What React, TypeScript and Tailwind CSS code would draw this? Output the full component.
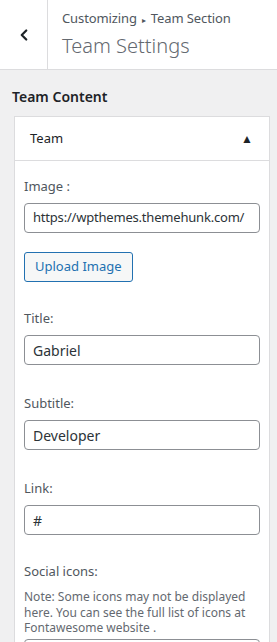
import { ChevronLeft } from 'lucide-react';

function Field({ label, value }: { label: string; value: string }) {
  return (
    <div className="mb-[30px]">
      <div className="text-[13px] text-[#50575e] leading-[16px] mb-[9px]">{label}</div>
      <div className="h-[30px] border border-[#8c8f94] rounded-[4px] px-[8px] flex items-center text-[14px] text-[#2c3338] overflow-hidden whitespace-nowrap">
        {value}
      </div>
    </div>
  );
}

export default function App() {
  return (
    <div className="w-[277px] h-[642px] overflow-hidden bg-[#f0f0f1] font-['Segoe_UI','Noto_Sans',sans-serif]">
      {/* Header */}
      <div className="flex h-[70px] bg-white border-b border-[#dcdcde]">
        <div className="w-[48px] border-r border-[#dcdcde] flex items-center justify-center text-[#1d2327]">
          <ChevronLeft className="w-[18px] h-[18px]" strokeWidth={3} />
        </div>
        <div className="pl-[14px] pt-[9px]">
          <div className="text-[13px] text-[#50575e] leading-[18px] tracking-[-0.1px]">
            Customizing<span className="text-[8px] align-middle mx-[5px]">▸</span>Team Section
          </div>
          <div className="text-[20px] text-[#646970] leading-[28px] font-light mt-[3px]">Team Settings</div>
        </div>
      </div>

      {/* Section */}
      <div className="pl-[12px] pr-[7px] pt-[18px]">
        <div className="text-[14px] font-semibold text-[#1d2327] leading-[18px] mb-[10px]">Team Content</div>
        <div className="ml-[2px] bg-white border border-[#dcdcde] border-b-0">
          <div className="h-[44px] border-b border-[#dcdcde] flex items-center justify-between pl-[15px] pr-[16px]">
            <span className="text-[13px] text-[#1d2327]">Team</span>
            <span className="text-[12px] text-[#1d2327]">▲</span>
          </div>
          <div className="px-[9px] pt-[17px]">
            <div className="text-[13px] text-[#50575e] leading-[16px] mb-[9px]">Image :</div>
            <div className="h-[30px] border border-[#8c8f94] rounded-[4px] px-[8px] flex items-center text-[13px] tracking-[-0.2px] text-[#2c3338] overflow-hidden whitespace-nowrap">
              https://wpthemes.themehunk.com/
            </div>
            <button className="mt-[19px] mb-[28px] h-[30px] px-[10px] border border-[#2271b1] rounded-[3px] bg-[#f6f7f7] text-[#2271b1] text-[13px]">
              Upload Image
            </button>
            <Field label="Title:" value="Gabriel" />
            <Field label="Subtitle:" value="Developer" />
            <Field label="Link:" value="#" />
            <div className="-mt-[2px] text-[13px] text-[#50575e] leading-[16px] mb-[10px]">Social icons:</div>
            <div className="text-[12px] text-[#646970] leading-[15.5px]">
              Note: Some icons may not be displayed here. You can see the full list of icons at Fontawesome website .
            </div>
            <div className="mt-[3px] h-[30px] border border-[#8c8f94] rounded-[4px]"></div>
          </div>
        </div>
      </div>
    </div>
  );
}
